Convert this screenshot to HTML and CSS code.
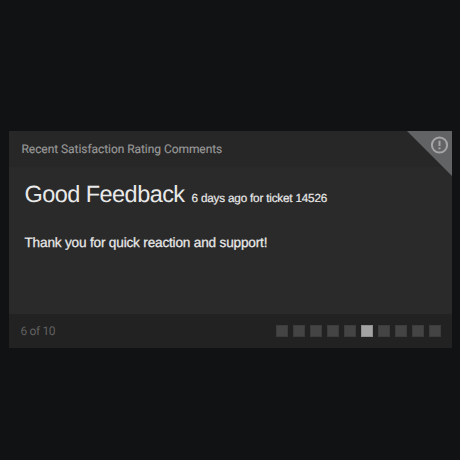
FILE: index.html
```
<!DOCTYPE html>
<html lang="en">
<head>
<meta charset="utf-8">
<title>Recent Satisfaction Rating Comments</title>
<link rel="stylesheet" href="styles.css">
</head>
<body>
<section class="widget">
  <header class="widget-header">Recent Satisfaction Rating Comments</header>
  <svg class="alert" viewBox="0 0 45 45" aria-hidden="true">
    <path class="alert-corner" d="M0 0H45V45Z"/>
    <circle class="alert-ring" cx="32.5" cy="14" r="7.6"/>
    <path class="alert-mark" d="M32.5 9.8V15M32.5 16.4V18.2"/>
  </svg>
  <article class="comment">
    <div class="comment-heading"><span class="rating">Good Feedback</span><span class="meta">6 days ago for ticket 14526</span></div>
    <p class="comment-text">Thank you for quick reaction and support!</p>
  </article>
  <footer class="widget-footer">
    <span class="count">6 of 10</span>
    <div class="pager">
      <i class="page"></i><i class="page"></i><i class="page"></i><i class="page"></i><i class="page"></i><i class="page current"></i><i class="page"></i><i class="page"></i><i class="page"></i><i class="page"></i>
    </div>
  </footer>
</section>
</body>
</html>
```
FILE: styles.css
```
* { box-sizing: border-box; }
body {
  margin: 0;
  height: 460px;
  padding: 131px 8px 0 9px;
  background: #111214;
  font-family: "Liberation Sans", Arial, sans-serif;
  text-rendering: geometricPrecision;
  white-space: nowrap;
}
.widget {
  position: relative;
  display: flex;
  flex-direction: column;
  height: 217px;
  background: #2a2a2a;
}
.widget-header {
  height: 36px;
  padding-left: 12.5px;
  background: #272727;
  color: #989898;
  font: 12px/36px Roboto, sans-serif;
  letter-spacing: -0.06px;
  -webkit-text-stroke: 0.15px;
}
.alert {
  position: absolute;
  top: 0;
  right: 0;
  width: 45px;
  height: 45px;
}
.alert-corner { fill: #626365; }
.alert-ring { fill: none; stroke: #a6a6a6; stroke-width: 2; }
.alert-mark { stroke: #a6a6a6; stroke-width: 2; }
.comment {
  flex: 1;
  padding: 12px 15.5px 0;
  color: #e9e9e9;
}
.comment-heading {
  display: flex;
  align-items: baseline;
  gap: 7px;
  line-height: 30px;
}
.rating { font-size: 23.5px; letter-spacing: -0.55px; }
.meta { font-size: 11.7px; letter-spacing: -0.18px; -webkit-text-stroke: 0.2px; }
.comment-text {
  margin: 20px 0 0;
  font-size: 13.6px;
  line-height: 18px;
  letter-spacing: -0.18px;
  -webkit-text-stroke: 0.25px;
}
.widget-footer {
  display: flex;
  align-items: center;
  justify-content: space-between;
  height: 34px;
  padding: 0 11px 0 11.5px;
  background: #222;
}
.count { color: #606060; font: 12px Roboto, sans-serif; letter-spacing: -0.35px; }
.pager { display: flex; gap: 5px; }
.page {
  width: 12px;
  height: 12px;
  background: #444;
  border: 1px solid #3c3c3c;
}
.current { background: #a3a3a3; border-color: #8e8e8e; }
```
